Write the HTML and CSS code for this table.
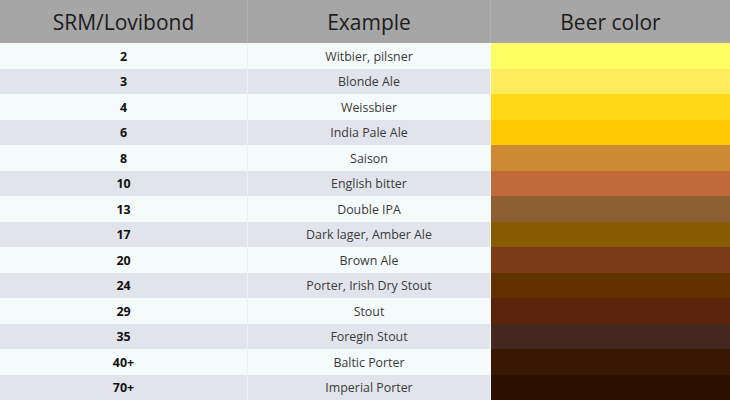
FILE: index.html
```html
<!DOCTYPE html>
<html>
<head>
<meta charset="utf-8">
<link rel="stylesheet" href="styles.css">
</head>
<body>
<div class="table">
  <div class="head">SRM/Lovibond</div>
  <div class="head">Example</div>
  <div class="head last">Beer color</div>

  <div class="srm odd">2</div><div class="ex odd">Witbier, pilsner</div><div class="sw" style="background:#ffff63"></div>
  <div class="srm even">3</div><div class="ex even">Blonde Ale</div><div class="sw" style="background:#ffec5d"></div>
  <div class="srm odd">4</div><div class="ex odd">Weissbier</div><div class="sw" style="background:#ffd816"></div>
  <div class="srm even">6</div><div class="ex even">India Pale Ale</div><div class="sw" style="background:#ffcb00"></div>
  <div class="srm odd">8</div><div class="ex odd">Saison</div><div class="sw" style="background:#cd8934"></div>
  <div class="srm even">10</div><div class="ex even">English bitter</div><div class="sw" style="background:#c06a3a"></div>
  <div class="srm odd">13</div><div class="ex odd">Double IPA</div><div class="sw" style="background:#8e5f33"></div>
  <div class="srm even">17</div><div class="ex even">Dark lager, Amber Ale</div><div class="sw" style="background:#885b00"></div>
  <div class="srm odd">20</div><div class="ex odd">Brown Ale</div><div class="sw" style="background:#7a3b16"></div>
  <div class="srm even">24</div><div class="ex even">Porter, Irish Dry Stout</div><div class="sw" style="background:#613100"></div>
  <div class="srm odd">29</div><div class="ex odd">Stout</div><div class="sw" style="background:#5b240c"></div>
  <div class="srm even">35</div><div class="ex even">Foregin Stout</div><div class="sw" style="background:#44271f"></div>
  <div class="srm odd">40+</div><div class="ex odd">Baltic Porter</div><div class="sw" style="background:#3a1700"></div>
  <div class="srm even">70+</div><div class="ex even">Imperial Porter</div><div class="sw" style="background:#2c1000"></div>
</div>
</body>
</html>
```
FILE: styles.css
```css
html, body {
  margin: 0;
  padding: 0;
  background: #ffffff;
}
body {
  font-family: "Open Sans", "Liberation Sans", sans-serif;
  width: 730px;
  height: 400px;
  overflow: hidden;
}
.table {
  display: grid;
  grid-template-columns: 248px 243px 239px;
  grid-template-rows: 43px;
  grid-auto-rows: 25.5px;
}
.head {
  background: #a6a6a6;
  color: #1c1c1c;
  font-size: 21px;
  display: flex;
  align-items: center;
  justify-content: center;
  border-right: 1px solid #b3b3b3;
  padding-top: 1px;
}
.head.last {
  border-right: none;
}
.srm, .ex {
  display: flex;
  align-items: center;
  justify-content: center;
  font-size: 12.4px;
  padding-top: 1px;
  border-right: 1px solid #eef1f4;
}
.srm {
  font-weight: 700;
  color: #111111;
}
.ex {
  color: #3a3a3a;
  border-right: 1px solid #f4f6f8;
}
.odd {
  background: #f5fafa;
}
.even {
  background: #e1e5eb;
}
.sw {
  display: block;
}
```
